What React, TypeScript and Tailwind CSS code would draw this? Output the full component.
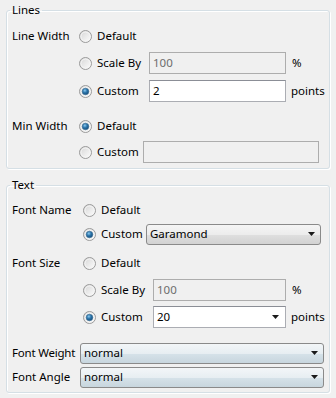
import React from "react";

function Radio({ checked }: { checked?: boolean }) {
  return (
    <svg width="13" height="13" viewBox="0 0 13 13" className="shrink-0">
      <defs>
        <linearGradient id="rg" x1="0" y1="0" x2="1" y2="1">
          <stop offset="0" stopColor="#d4d4d4" />
          <stop offset="1" stopColor="#ffffff" />
        </linearGradient>
        <radialGradient id="dot" cx="0.4" cy="0.35" r="0.7">
          <stop offset="0" stopColor="#8ccaf0" />
          <stop offset="0.45" stopColor="#2f78ad" />
          <stop offset="1" stopColor="#0f4674" />
        </radialGradient>
      </defs>
      <circle cx="6.5" cy="6.5" r="6" fill="url(#rg)" stroke="#9a9a9a" strokeWidth="1" />
      <circle cx="6.5" cy="6.5" r="4.5" fill="none" stroke="#f4f4f4" strokeWidth="1" />
      {checked && <circle cx="6.5" cy="6.5" r="3.3" fill="url(#dot)" stroke="#3b6f96" strokeWidth="0.6" />}
    </svg>
  );
}

function Arrow() {
  return (
    <svg width="7" height="4" viewBox="0 0 7 4" className="shrink-0">
      <path d="M0 0h7L3.5 4z" fill="#1a1a1a" />
    </svg>
  );
}

function Option({ checked, label, w }: { checked?: boolean; label: string; w: string }) {
  return (
    <div className={`flex items-center gap-[5px] shrink-0 ${w}`}>
      <Radio checked={checked} />
      <span>{label}</span>
    </div>
  );
}

function TextBox({ value, disabled, w }: { value: string; disabled?: boolean; w: string }) {
  return (
    <div
      className={`h-[22px] flex items-center px-[3px] border ${w} ${
        disabled ? "bg-[#f0f0f0] border-[#adadad] text-[#6d6d6d]" : "bg-white border-[#abadb3] border-t-[#8b8e96]"
      }`}
    >
      {value}
    </div>
  );
}

function Combo({ value, w, tone }: { value: string; w: string; tone: "gray" | "blue" }) {
  const bg =
    tone === "gray"
      ? "bg-[linear-gradient(#f5f5f5_0%,#ececec_50%,#dfdfdf_51%,#d2d2d2_100%)]"
      : "bg-[linear-gradient(#f3f6f8_0%,#e7eef2_50%,#d6e2e9_51%,#c8d6de_100%)]";
  return (
    <div className={`h-[21px] flex items-center justify-between pl-[3px] pr-[5px] border border-[#8a8a8a] rounded-[3px] ${bg} ${w}`}>
      <span>{value}</span>
      <Arrow />
    </div>
  );
}

function Group({ title, h, className, children }: { title: string; h: string; className?: string; children: React.ReactNode }) {
  return (
    <fieldset className={`border border-[#d5dfe5] rounded-[3px] shadow-[inset_1px_1px_0_#ffffff,1px_1px_0_#ffffff] ${h} ${className ?? ""}`}>
      <legend className="ml-[3px] px-[2px] leading-[16px]">{title}</legend>
      <div className="pl-[5px] flex flex-col">{children}</div>
    </fieldset>
  );
}

export default function App() {
  return (
    <div className="w-[336px] h-[398px] bg-[#f0f0f0] font-['Noto_Sans',sans-serif] text-[11.5px] whitespace-nowrap text-black pt-[2px] pl-[6px] pr-[6px] overflow-hidden">
      <Group title="Lines" h="h-[167px]">
        <div className="h-[24px] mt-[6px] flex items-center">
          <span className="w-[67px] shrink-0">Line Width</span>
          <Option label="Default" w="w-[70px]" />
        </div>
        <div className="h-[24px] mt-[3px] flex items-center">
          <span className="w-[67px] shrink-0" />
          <Option label="Scale By" w="w-[70px]" />
          <TextBox value="100" disabled w="w-[137px]" />
          <span className="ml-[6px]">%</span>
        </div>
        <div className="h-[24px] mt-[4px] flex items-center">
          <span className="w-[67px] shrink-0" />
          <Option checked label="Custom" w="w-[70px]" />
          <TextBox value="2" w="w-[137px]" />
          <span className="ml-[5px]">points</span>
        </div>
        <div className="h-[24px] mt-[11px] flex items-center">
          <span className="w-[67px] shrink-0">Min Width</span>
          <Option checked label="Default" w="w-[64px]" />
        </div>
        <div className="h-[24px] mt-[2px] flex items-center">
          <span className="w-[67px] shrink-0" />
          <Option label="Custom" w="w-[64px]" />
          <TextBox value="" disabled w="w-[176px]" />
        </div>
      </Group>

      <Group title="Text" h="h-[216px]" className="mt-[8px]">
        <div className="h-[24px] mt-[5px] flex items-center">
          <span className="w-[71px] shrink-0">Font Name</span>
          <Option label="Default" w="w-[63px]" />
        </div>
        <div className="h-[24px] flex items-center">
          <span className="w-[71px] shrink-0" />
          <Option checked label="Custom" w="w-[63px]" />
          <Combo value="Garamond" tone="gray" w="w-[175px]" />
        </div>
        <div className="h-[24px] mt-[5px] flex items-center">
          <span className="w-[71px] shrink-0">Font Size</span>
          <Option label="Default" w="w-[70px]" />
        </div>
        <div className="h-[24px] mt-[3px] flex items-center">
          <span className="w-[71px] shrink-0" />
          <Option label="Scale By" w="w-[70px]" />
          <TextBox value="100" disabled w="w-[133px]" />
          <span className="ml-[6px]">%</span>
        </div>
        <div className="h-[24px] mt-[3px] flex items-center">
          <span className="w-[71px] shrink-0" />
          <Option checked label="Custom" w="w-[70px]" />
          <div className="h-[22px] w-[133px] flex items-center justify-between pl-[3px] pr-[6px] bg-white border border-[#abadb3] border-t-[#8b8e96]">
            <span>20</span>
            <Arrow />
          </div>
          <span className="ml-[5px]">points</span>
        </div>
        <div className="h-[24px] mt-[12px] flex items-center">
          <span className="w-[68px] shrink-0 tracking-[-0.2px]">Font Weight</span>
          <Combo value="normal" tone="blue" w="w-[244px]" />
        </div>
        <div className="h-[24px] flex items-center">
          <span className="w-[68px] shrink-0">Font Angle</span>
          <Combo value="normal" tone="blue" w="w-[244px]" />
        </div>
      </Group>
    </div>
  );
}
